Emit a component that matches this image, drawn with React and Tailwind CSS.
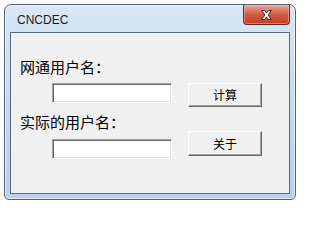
import React from "react";

function CloseGlyph() {
  return (
    <svg width="13" height="10" viewBox="0 0 13 10">
      <path
        d="M1.5 0.5 H4.5 L6.5 3 L8.5 0.5 H11.5 L8 5 L11.5 9.5 H8.5 L6.5 7 L4.5 9.5 H1.5 L5 5 Z"
        fill="#ffffff"
        stroke="#4a2e28"
        strokeWidth="1"
        strokeLinejoin="round"
      />
    </svg>
  );
}

function TextBox() {
  return (
    <div className="w-[120px] h-[20px] bg-white border border-t-[#a0a0a0] border-l-[#a0a0a0] border-r-white border-b-white shadow-[inset_1px_1px_0_#696969,inset_-1px_-1px_0_#e3e3e3]" />
  );
}

function Btn({ children, className = "" }) {
  return (
    <button
      className={
        "w-[74px] bg-[#f0f0f0] border border-t-white border-l-white border-r-[#696969] border-b-[#696969] shadow-[inset_-1px_-1px_0_#a0a0a0] text-[12px] leading-none text-black flex items-center justify-center " +
        className
      }
      style={{ fontFamily: '"Noto Sans CJK SC", sans-serif' }}
    >
      {children}
    </button>
  );
}

export default function App() {
  return (
    <div className="w-[302px] h-[204px] bg-white pt-[4px] pl-[4px]">
      <div className="w-[292px] h-[196px] rounded-t-[7px] rounded-b-[5px] border border-[#55616f] bg-linear-to-b from-[#d9e7f6] via-[#c6d9ef] to-[#b9d0ea] px-[5px] pb-[5px] flex flex-col shadow-[inset_0_0_0_1px_rgba(255,255,255,0.6)]">
        <div className="h-[27px] flex items-start">
          <div
            className="pl-[7px] pt-[8px] text-[12px] leading-[14px] text-[#1b1b1b]"
            style={{ fontFamily: '"Liberation Sans", Arial, sans-serif' }}
          >
            CNCDEC
          </div>
          <div className="ml-auto w-[47px] h-[20px] rounded-b-[4px] border border-t-0 border-[#6a2a20] bg-linear-to-b from-[#e9a899] from-0% via-[#cf5b45] via-50% to-[#c53f27] shadow-[inset_0_0_0_1px_rgba(255,200,190,0.45)] flex items-center justify-center">
            <CloseGlyph />
          </div>
        </div>
        <div
          className="flex-1 border border-[#566b82] bg-[#f0f0f0] pl-[9px] pt-[26px] flex flex-col text-black"
          style={{ fontFamily: '"Noto Sans CJK SC", sans-serif' }}
        >
          <div className="h-[15px] text-[15px] leading-[15px]">网通用户名：</div>
          <div className="mt-[9px] pl-[32px] flex items-start gap-[16px]">
            <TextBox />
            <Btn className="h-[24px]">计算</Btn>
          </div>
          <div className="mt-[7px] h-[15px] text-[15px] leading-[15px]">实际的用户名：</div>
          <div className="mt-[2px] pl-[32px] flex items-start gap-[16px]">
            <div className="mt-[8px]">
              <TextBox />
            </div>
            <Btn className="h-[25px]">关于</Btn>
          </div>
        </div>
      </div>
    </div>
  );
}
